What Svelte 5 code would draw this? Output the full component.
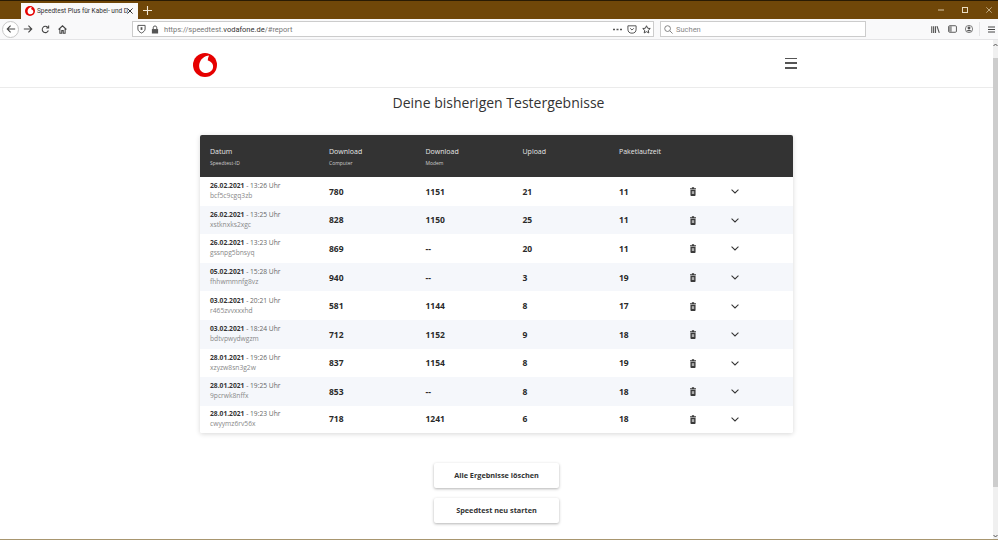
<script>
  const rows = [
    ['26.02.2021', '13:26 Uhr', 'bcf5c9cgq3zb', '780', '1151', '21', '11'],
    ['26.02.2021', '13:25 Uhr', 'xstknxks2xgc', '828', '1150', '25', '11'],
    ['26.02.2021', '13:23 Uhr', 'gssnpg5bnsyq', '869', '--', '20', '11'],
    ['05.02.2021', '15:28 Uhr', 'fhhwmmnfg8vz', '940', '--', '3', '19'],
    ['03.02.2021', '20:21 Uhr', 'r465zvvxxxhd', '581', '1144', '8', '17'],
    ['03.02.2021', '18:24 Uhr', 'bdtvpwydwgzm', '712', '1152', '9', '18'],
    ['28.01.2021', '19:26 Uhr', 'xzyzw8sn3g2w', '837', '1154', '8', '19'],
    ['28.01.2021', '19:25 Uhr', '9pcrwk8nffx', '853', '--', '8', '18'],
    ['28.01.2021', '19:23 Uhr', 'cwyymz6rv56x', '718', '1241', '6', '18']
  ];
</script>

{#snippet logo(size)}
  <svg width={size} height={size} viewBox="0 0 24 24">
    <circle cx="12" cy="12" r="12" fill="#e60000" />
    <path d="M16.200 2.600c-3.600.3-7.400 2.600-9 5.800-1.700 3.300-1.400 7.600 1.400 10 3 2.500 7.600 2 10-.8 2.100-2.500 2-6.200-.3-8.200-1-1-2.300-1.400-3.500-1.800 0-2 .6-3.600 1.400-5z" fill="#fff" />
  </svg>
{/snippet}

<div class="window">
  <div class="titlebar">
    <div class="tab">
      <span class="favicon">{@render logo(10)}</span>
      <span class="tabtitle">Speedtest Plus für Kabel- und D</span>
      <svg class="ico" width="6" height="6" viewBox="0 0 6 6"><path d="M.4.400l5.200 5.200M5.600.400L.4 5.600" stroke="#333" stroke-width="1" /></svg>
    </div>
    <svg class="newtab" width="9" height="9" viewBox="0 0 9 9"><path d="M4.500 0v9M0 4.500h9" stroke="#f4ead8" stroke-width="1.100" /></svg>
    <div class="winctl">
      <svg width="6" height="6" viewBox="0 0 6 6"><path d="M0 3h6" stroke="#d9c7a6" stroke-width="1" /></svg>
      <svg width="6" height="6" viewBox="0 0 6 6"><rect x=".5" y=".5" width="5" height="5" fill="none" stroke="#eadcc2" stroke-width="1" /></svg>
      <svg width="6" height="6" viewBox="0 0 6 6"><path d="M.3.300l5.400 5.400M5.700.300L.3 5.700" stroke="#c9b48e" stroke-width=".9" /></svg>
    </div>
  </div>

  <div class="toolbar">
    <div class="nav">
      <span class="back">
        <svg width="10" height="10" viewBox="0 0 12 12"><path d="M11 6H1.500M5.500 2L1.500 6l4 4" fill="none" stroke="#444" stroke-width="1.300" /></svg>
      </span>
      <svg width="10" height="10" viewBox="0 0 12 12"><path d="M1 6h9.500M6.500 2l4 4-4 4" fill="none" stroke="#444" stroke-width="1.300" /></svg>
      <svg width="9" height="9" viewBox="0 0 12 12"><path d="M9.800 7.400A4.200 4.200 0 1 1 9 3.200M10.200.8v3.200H7" fill="none" stroke="#444" stroke-width="1.400" /></svg>
      <svg width="9" height="9" viewBox="0 0 12 12"><path d="M.8 6L6 1l5.200 5M2.500 5v6h2.500V7.500h2V11h2.500V5" fill="none" stroke="#444" stroke-width="1.400" /></svg>
    </div>
    <div class="urlbar">
      <svg width="9" height="10" viewBox="0 0 10 11"><path d="M1 1.500h8v4c0 2-2 3.500-4 4.500-2-1-4-2.500-4-4.500z" fill="none" stroke="#555" stroke-width="1.100" /><path d="M5 3.500v3" stroke="#555" stroke-width="2" /></svg>
      <svg class="lock" width="8" height="9" viewBox="0 0 9 10"><path d="M2.500 4.500V3a2 2 0 0 1 4 0v1.500" fill="none" stroke="#555" stroke-width="1.100" /><rect x="1" y="4.500" width="7" height="5" fill="#555" /></svg>
      <span class="url">https://speedtest.<b>vodafone.de</b>/#report</span>
      <svg width="9" height="3" viewBox="0 0 9 3"><path d="M0 1.500h2M3.500 1.500h2M7 1.500h2" stroke="#555" stroke-width="1.400" /></svg>
      <svg class="pocket" width="10" height="9" viewBox="0 0 12 11"><path d="M1 1h10v4a5 5 0 0 1-10 0z" fill="none" stroke="#555" stroke-width="1.200" /><path d="M3.800 4l2.200 2.200L8.200 4" fill="none" stroke="#555" stroke-width="1.200" /></svg>
      <svg width="9" height="9" viewBox="0 0 12 12"><path d="M6 1l1.500 3.300 3.500.4-2.600 2.400.7 3.500L6 8.900l-3.100 1.700.7-3.500L1 4.700l3.500-.4z" fill="none" stroke="#444" stroke-width="1.300" /></svg>
    </div>
    <div class="search">
      <svg width="9" height="9" viewBox="0 0 10 10"><circle cx="4" cy="4" r="3.200" fill="none" stroke="#777" /><path d="M6.500 6.500L9.500 9.500" stroke="#777" /></svg>
      <span>Suchen</span>
    </div>
    <div class="tools">
      <svg width="9" height="9" viewBox="0 0 12 11"><path d="M1 1v9M3.500 1v9M6 1v9M8 1l3 9" fill="none" stroke="#555" stroke-width="1.500" /></svg>
      <svg width="9" height="8" viewBox="0 0 12 11"><rect x=".6" y="1" width="10.800" height="9" rx="1.500" fill="none" stroke="#555" stroke-width="1.300" /><rect x="1" y="1.500" width="4" height="8" fill="#999" /></svg>
      <svg width="8" height="8" viewBox="0 0 11 11"><circle cx="5.500" cy="5.500" r="5" fill="none" stroke="#555" /><circle cx="5.500" cy="4.200" r="2" fill="#555" /><path d="M2 8.500c1-2 6-2 7 0z" fill="#555" /></svg>
      <i class="sep"></i>
      <svg width="7" height="7" viewBox="0 0 7 7"><path d="M0 1h7M0 3.500h7M0 6h7" stroke="#444" stroke-width="1" /></svg>
    </div>
  </div>

  <div class="viewport">
    <div class="page">
      <header class="header">
        <div class="logo">{@render logo(24)}</div>
        <button class="burger" aria-label="Menü"><i></i><i></i><i></i></button>
      </header>
      <h1>Deine bisherigen Testergebnisse</h1>
      <div class="card">
        <div class="row head">
          <div class="cell"><span>Datum</span><small>Speedtest-ID</small></div>
          <div class="cell"><span>Download</span><small>Computer</small></div>
          <div class="cell"><span>Download</span><small>Modem</small></div>
          <div class="cell"><span>Upload</span><small>&nbsp;</small></div>
          <div class="cell"><span>Paketlaufzeit</span><small>&nbsp;</small></div>
        </div>
        {#each rows as r}
          <div class="row body">
            <div class="cell when">
              <div class="date"><b>{r[0]}</b> - {r[1]}</div>
              <div class="id">{r[2]}</div>
            </div>
            <div class="val">{r[3]}</div>
            <div class="val">{r[4]}</div>
            <div class="val">{r[5]}</div>
            <div class="val">{r[6]}</div>
            <div class="act">
              <svg class="trash" width="6" height="9" viewBox="0 0 8 10" preserveAspectRatio="none"><path d="M2.500.3h3v1h2.500v1.200H0V1.300h2.500zM.6 3h6.800v6a1 1 0 0 1-1 1H1.600a1 1 0 0 1-1-1z" fill="#3a3a3a" /><rect x="2.400" y="4.600" width="3.200" height="3.200" fill="#aaa" /></svg>
              <svg class="chev" width="8" height="5" viewBox="0 0 10 6"><path d="M.7.800L5 4.800 9.300.8" fill="none" stroke="#333" stroke-width="1.300" /></svg>
            </div>
          </div>
        {/each}
      </div>
      <div class="actions">
        <button>Alle Ergebnisse löschen</button>
        <button>Speedtest neu starten</button>
      </div>
    </div>
    <div class="scrollbar">
      <svg width="5" height="4" viewBox="0 0 5 4"><path d="M.5 3L2.500 1 4.500 3" fill="none" stroke="#555" /></svg>
      <div class="thumb"></div>
      <svg class="down" width="5" height="4" viewBox="0 0 5 4"><path d="M.5 1L2.500 3 4.500 1" fill="none" stroke="#555" /></svg>
    </div>
  </div>
  <div class="bottomline"></div>
</div>

<style>
  :global(body) {
    margin: 0;
    background: #fff;
    font-family: "Open Sans", "Noto Sans", sans-serif;
    color: #222;
    overflow: hidden;
  }
  .window {
    height: 540px;
    display: flex;
    flex-direction: column;
    overflow: hidden;
  }
  .titlebar {
    height: 18px;
    background: #704709;
    border-top: 1px solid #2a1b04;
    display: flex;
    align-items: flex-end;
    padding-left: 21px;
    flex: none;
  }
  .tab {
    width: 117px;
    height: 16px;
    box-sizing: border-box;
    background: #f9f9fa;
    display: flex;
    align-items: center;
    padding: 0 5px 0 4px;
    font-family: Roboto, sans-serif;
    font-size: 6.500px;
    color: #333;
  }
  .favicon {
    display: flex;
    margin-right: 2px;
  }
  .tabtitle {
    flex: 1;
    min-width: 0;
    white-space: nowrap;
  }
  .ico {
    flex: none;
    margin-left: 1px;
  }
  .newtab {
    margin: 0 0 4px 5px;
  }
  .winctl {
    margin-left: auto;
    display: flex;
    gap: 18px;
    padding-right: 6px;
    margin-bottom: 6px;
    align-items: center;
  }
  .toolbar {
    height: 21px;
    flex: none;
    background: #f9f9fa;
    border-bottom: 1px solid #e4e4e6;
    display: flex;
    align-items: center;
    box-sizing: border-box;
  }
  .nav {
    display: flex;
    align-items: center;
    gap: 8px;
    width: 132px;
    padding-left: 2px;
    box-sizing: border-box;
    flex: none;
  }
  .back {
    width: 17px;
    height: 17px;
    border: 1px solid #c8c8c8;
    border-radius: 50%;
    display: flex;
    align-items: center;
    justify-content: center;
    box-sizing: border-box;
    background: #fff;
    margin-right: -4px;
  }
  .urlbar {
    width: 522px;
    height: 16px;
    box-sizing: border-box;
    border: 1px solid #ccc;
    background: #fff;
    display: flex;
    align-items: center;
    gap: 5px;
    padding: 0 2px 0 4px;
    flex: none;
  }
  .urlbar svg {
    flex: none;
  }
  .url {
    font-family: Roboto, sans-serif;
    font-size: 7.500px;
    color: #777;
    flex: 1;
    white-space: nowrap;
  }
  .url b {
    color: #333;
    font-weight: 400;
  }
  .search {
    margin-left: 6px;
    width: 206px;
    height: 16px;
    box-sizing: border-box;
    border: 1px solid #ccc;
    background: #fff;
    display: flex;
    align-items: center;
    gap: 3px;
    padding-left: 3px;
    font-family: Roboto, sans-serif;
    font-size: 7.500px;
    color: #888;
    flex: none;
  }
  .tools {
    margin-left: auto;
    display: flex;
    align-items: center;
    gap: 8px;
    padding-right: 3px;
  }
  .sep {
    width: 1px;
    height: 14px;
    margin-left: -2px;
    background: #e4e4e6;
  }
  .viewport {
    flex: 1;
    min-height: 0;
    display: flex;
    overflow: hidden;
  }
  .page {
    flex: 1;
    min-width: 0;
    display: flex;
    flex-direction: column;
    align-items: center;
  }
  .header {
    width: 100%;
    height: 48px;
    box-sizing: border-box;
    flex: none;
    border-bottom: 1px solid #ebebeb;
    display: flex;
    align-items: center;
    justify-content: space-between;
    padding: 2px 196px 0 193px;
  }
  .logo {
    display: flex;
  }
  .burger {
    width: 12px;
    height: 11px;
    padding: 0;
    border: 0;
    background: none;
    display: flex;
    flex-direction: column;
    justify-content: space-between;
    margin-bottom: 3px;
  }
  .burger i {
    display: block;
    height: 1.500px;
    background: #555;
    width: 12px;
  }
  h1 {
    margin: 4px 0 0;
    padding-left: 4px;
    font-size: 14px;
    line-height: 22px;
    font-weight: 400;
    color: #333;
  }
  .card {
    margin-top: 21px;
    width: 593px;
    border-radius: 2px;
    background: #fff;
    box-shadow: 0 1px 5px rgba(0, 0, 0, .16);
    overflow: hidden;
    flex: none;
  }
  .row {
    display: grid;
    grid-template-columns: 119px 96.500px 97px 96.500px 70px 1fr;
    align-items: center;
    padding-left: 10px;
    box-sizing: border-box;
  }
  .head {
    height: 42px;
    background: #333;
    color: #e6e6e6;
    font-size: 7px;
    align-items: start;
    padding-top: 11px;
  }
  .head span {
    display: block;
    line-height: 12px;
  }
  .head small {
    display: block;
    font-size: 5px;
    line-height: 8px;
    color: #ccc;
    margin-top: 1px;
  }
  .body {
    height: 28.600px;
    background: #fff;
  }
  .body:nth-child(odd) {
    background: #f5f7fb;
  }
  .body:last-child {
    height: 27px;
    padding-bottom: 1px;
  }
  .date {
    font-size: 6.700px;
    line-height: 10px;
    color: #666;
    white-space: nowrap;
  }
  .date b {
    color: #333;
    font-weight: 700;
  }
  .id {
    font-size: 6.700px;
    line-height: 10px;
    color: #888;
  }
  .val {
    font-size: 8.500px;
    font-weight: 700;
    color: #2a2a2a;
  }
  .act {
    display: flex;
    align-items: center;
    gap: 35px;
    padding: 1px 0 0 1px;
  }
  .actions {
    margin-top: 30px;
    display: flex;
    flex-direction: column;
    gap: 10px;
    align-items: center;
  }
  .actions button {
    width: 125px;
    height: 25px;
    background: #fff;
    border: 0;
    border-radius: 2px;
    box-shadow: 0 1px 3px rgba(0, 0, 0, .3);
    font-family: inherit;
    font-size: 7.300px;
    font-weight: 700;
    color: #333;
    padding: 0;
  }
  .scrollbar {
    width: 5px;
    flex: none;
    background: #f0f0f0;
    display: flex;
    flex-direction: column;
    align-items: center;
    padding-top: 3px;
    box-sizing: border-box;
  }
  .thumb {
    width: 5px;
    height: 429px;
    background: #cdcdcd;
    margin-top: 11px;
    flex: none;
  }
  .down {
    margin-top: auto;
    margin-bottom: 1px;
  }
  .bottomline {
    height: 1px;
    flex: none;
    background: #a8966f;
  }
</style>
